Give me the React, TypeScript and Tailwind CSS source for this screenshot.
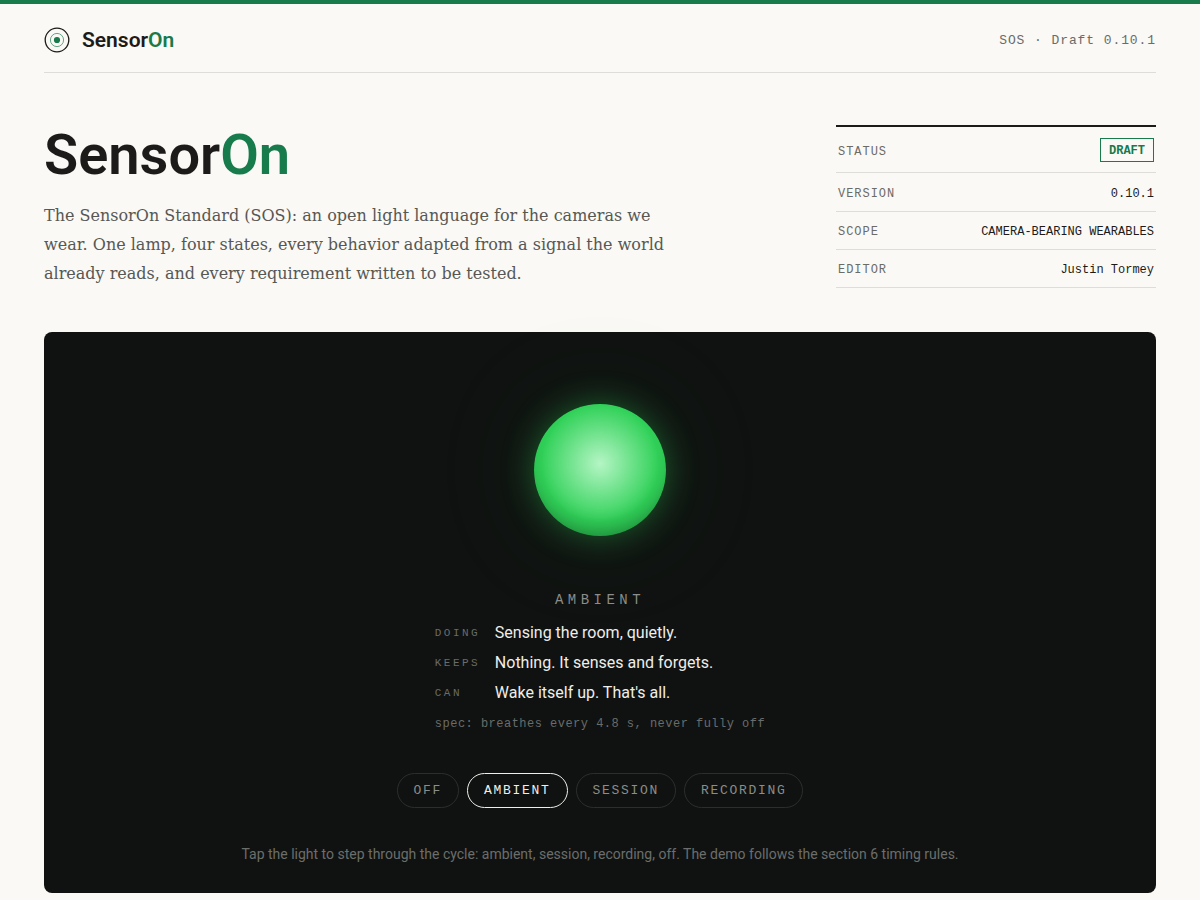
import { useState } from 'react';

const MONO = "font-['Liberation_Mono',monospace]";

const META = [
  { label: 'STATUS', value: 'DRAFT', badge: true },
  { label: 'VERSION', value: '0.10.1' },
  { label: 'SCOPE', value: 'CAMERA-BEARING WEARABLES' },
  { label: 'EDITOR', value: 'Justin Tormey' },
];

const MODES = ['OFF', 'AMBIENT', 'SESSION', 'RECORDING'];

const FACTS = [
  { label: 'DOING', text: 'Sensing the room, quietly.' },
  { label: 'KEEPS', text: 'Nothing. It senses and forgets.' },
  { label: 'CAN', text: "Wake itself up. That's all." },
];

const LAMP_ON =
  'bg-[radial-gradient(circle_at_50%_45%,#b5f5c5_0%,#30d158_60%)] shadow-[0_0_32px_rgba(48,209,88,0.38),0_0_120px_rgba(48,209,88,0.1),inset_0_-14px_20px_-10px_rgba(0,0,0,0.38)]';

function LogoMark() {
  return (
    <svg width="26" height="26" viewBox="0 0 26 26" fill="none" aria-hidden="true">
      <circle cx="13" cy="13" r="11.8" stroke="#1c1b1a" strokeWidth="1.3" />
      <circle cx="13" cy="13" r="6.6" stroke="#177b4b" strokeOpacity="0.65" strokeWidth="1" />
      <circle cx="13" cy="13" r="3.1" fill="#177b4b" />
    </svg>
  );
}

function Header() {
  return (
    <header className="flex items-center justify-between border-b border-[#deded9] pt-[22px] pb-[18px]">
      <a href="#" className="flex items-center gap-3 text-[21px] leading-7 font-semibold">
        <LogoMark />
        <span>Sensor<span className="text-[#177b4b]">On</span></span>
      </a>
      <span className={`${MONO} pt-0.5 text-[13px] leading-5 tracking-[0.07em] text-[#6b6b67]`}>SOS · Draft 0.10.1</span>
    </header>
  );
}

function MetaTable() {
  return (
    <table className={`${MONO} w-full border-t-2 border-[#1c1b1a] text-xs leading-4`}>
      <tbody>
        {META.map(row => (
          <tr key={row.label} className="border-b border-[#deded9]">
            <th scope="row" className="px-0.5 pt-3 pb-2 text-left font-normal tracking-[0.08em] text-[#6b6b67]">{row.label}</th>
            <td className={`px-0.5 text-right ${row.badge ? 'py-[10px]' : 'pt-3 pb-2'}`}>
              {row.badge ? (
                <span className="inline-block border border-[#177b4b] px-2 pt-1 pb-0.5 font-bold text-[#177b4b]">{row.value}</span>
              ) : row.value}
            </td>
          </tr>
        ))}
      </tbody>
    </table>
  );
}

export default function App() {
  const [mode, setMode] = useState(1);

  return (
    <div className="min-h-screen border-t-4 border-[#177b4b] bg-[#faf9f5] px-11 pb-2 font-[Roboto,sans-serif] text-[#1c1b1a]">
      <Header />

      <section className="grid grid-cols-[1fr_320px] gap-12 pt-[52px] pb-11">
        <div>
          <h1 className="text-[56px] leading-[60px] font-semibold">Sensor<span className="text-[#177b4b]">On</span></h1>
          <p className="mt-4 max-w-[650px] font-['DejaVu_Serif',serif] text-base leading-[29px] text-[#575754]">
            The SensorOn Standard (SOS): an open light language for the cameras we wear. One lamp, four states, every
            behavior adapted from a signal the world already reads, and every requirement written to be tested.
          </p>
        </div>
        <MetaTable />
      </section>

      <section className="flex flex-col items-center rounded-lg bg-[#101211] px-6 pt-[72px] pb-7">
        <button
          type="button"
          aria-label="Light"
          onClick={() => setMode((mode + 1) % MODES.length)}
          className={`size-[132px] rounded-full ${mode === 0 ? 'bg-[#1c201d]' : LAMP_ON}`}
        />
        <h2 className={`${MONO} mt-[54px] text-sm leading-5 tracking-[0.32em] text-[#8a8d89]`}>{MODES[mode]}</h2>

        <div className="mt-2">
          <dl>
            {FACTS.map(fact => (
              <div key={fact.label} className="flex items-center py-[3px]">
                <dt className={`${MONO} w-[60px] text-[11px] leading-4 tracking-[0.22em] text-[#696c69]`}>{fact.label}</dt>
                <dd className="text-base leading-6 text-[#eeeeea]">{fact.text}</dd>
              </div>
            ))}
          </dl>
          <p className={`${MONO} mt-2 text-xs leading-4 tracking-[0.04em] text-[#696c69]`}>
            spec: breathes every 4.8 s, never fully off
          </p>
        </div>

        <div className="mt-[41px] flex flex-wrap justify-center gap-2">
          {MODES.map((name, i) => (
            <button
              key={name}
              type="button"
              aria-pressed={i === mode}
              onClick={() => setMode(i)}
              className={`${MONO} rounded-full border px-4 py-2 text-[13px] leading-[17px] tracking-[0.13em] ${
                i === mode ? 'border-[#eeeeea] text-[#eeeeea]' : 'border-[#2b2e2c] text-[#8a8d89]'
              }`}
            >
              {name}
            </button>
          ))}
        </div>

        <p className="mt-9 text-sm leading-[21px] text-[#6b6e6b]">
          Tap the light to step through the cycle: ambient, session, recording, off. The demo follows the section 6 timing rules.
        </p>
      </section>
    </div>
  );
}
